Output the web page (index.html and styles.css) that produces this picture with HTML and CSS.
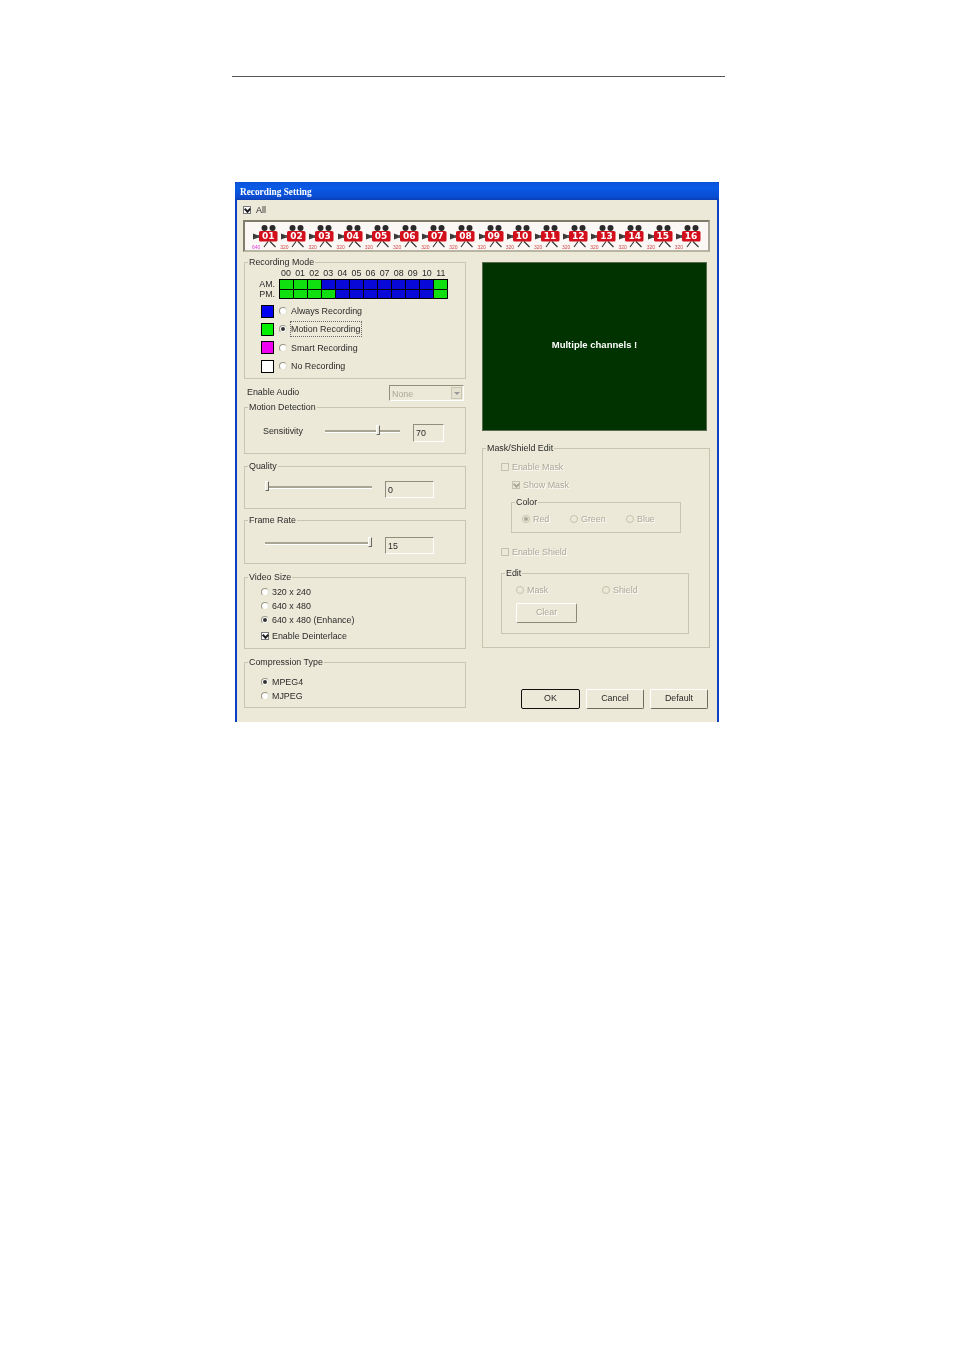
FILE: index.html
```html
<!DOCTYPE html>
<html lang="en">
<head>
<meta charset="utf-8">
<title>Recording Setting</title>
<link rel="stylesheet" href="styles.css">
</head>
<body>
<svg class="defs" width="0" height="0" aria-hidden="true">
  <symbol id="cam" viewBox="0 0 28 26">
    <circle cx="12.5" cy="6" r="3" fill="#2a2a2a"/>
    <circle cx="20.5" cy="6" r="3" fill="#2a2a2a"/>
    <path d="M1 11.5l4 1.5v3l-4 1.5z" fill="#3a3a3a"/>
    <rect x="5" y="13" width="3" height="3" fill="#555"/>
    <rect x="7" y="9" width="18.5" height="10.5" rx="1.5" fill="#d40f1c"/>
    <path d="M16 19.5l-4 5.5M18 19.5l5.500 5.500" stroke="#333" stroke-width="1.100" fill="none"/>
  </symbol>
</svg>
<hr class="rule">
<main class="dialog">
  <header class="titlebar">Recording Setting</header>
  <div class="all-row"><span class="check on"></span><span>All</span></div>
  <div class="strip">
    <div class="cam"><svg class="cam-icon"><use href="#cam"/></svg><b class="cam-no">01</b><i class="cam-res pink">640</i></div>
    <div class="cam"><svg class="cam-icon"><use href="#cam"/></svg><b class="cam-no">02</b><i class="cam-res">320</i></div>
    <div class="cam"><svg class="cam-icon"><use href="#cam"/></svg><b class="cam-no">03</b><i class="cam-res">320</i></div>
    <div class="cam"><svg class="cam-icon"><use href="#cam"/></svg><b class="cam-no">04</b><i class="cam-res">320</i></div>
    <div class="cam"><svg class="cam-icon"><use href="#cam"/></svg><b class="cam-no">05</b><i class="cam-res">320</i></div>
    <div class="cam"><svg class="cam-icon"><use href="#cam"/></svg><b class="cam-no">06</b><i class="cam-res">320</i></div>
    <div class="cam"><svg class="cam-icon"><use href="#cam"/></svg><b class="cam-no">07</b><i class="cam-res">320</i></div>
    <div class="cam"><svg class="cam-icon"><use href="#cam"/></svg><b class="cam-no">08</b><i class="cam-res">320</i></div>
    <div class="cam"><svg class="cam-icon"><use href="#cam"/></svg><b class="cam-no">09</b><i class="cam-res">320</i></div>
    <div class="cam"><svg class="cam-icon"><use href="#cam"/></svg><b class="cam-no">10</b><i class="cam-res">320</i></div>
    <div class="cam"><svg class="cam-icon"><use href="#cam"/></svg><b class="cam-no">11</b><i class="cam-res">320</i></div>
    <div class="cam"><svg class="cam-icon"><use href="#cam"/></svg><b class="cam-no">12</b><i class="cam-res">320</i></div>
    <div class="cam"><svg class="cam-icon"><use href="#cam"/></svg><b class="cam-no">13</b><i class="cam-res">320</i></div>
    <div class="cam"><svg class="cam-icon"><use href="#cam"/></svg><b class="cam-no">14</b><i class="cam-res">320</i></div>
    <div class="cam"><svg class="cam-icon"><use href="#cam"/></svg><b class="cam-no">15</b><i class="cam-res">320</i></div>
    <div class="cam"><svg class="cam-icon"><use href="#cam"/></svg><b class="cam-no">16</b><i class="cam-res">320</i></div>
  </div>
  <div class="columns">
    <section class="col-left">
      <div class="group g-mode">
        <span class="legend">Recording Mode</span>
        <div class="hours"><span>00</span><span>01</span><span>02</span><span>03</span><span>04</span><span>05</span><span>06</span><span>07</span><span>08</span><span>09</span><span>10</span><span>11</span></div>
        <div class="sched">
          <div class="ampm"><span>AM.</span><span>PM.</span></div>
          <div class="grid">
            <i class="g"></i><i class="g"></i><i class="g"></i><i class="b"></i><i class="b"></i><i class="b"></i><i class="b"></i><i class="b"></i><i class="b"></i><i class="b"></i><i class="b"></i><i class="g"></i>
            <i class="g"></i><i class="g"></i><i class="g"></i><i class="g"></i><i class="b"></i><i class="b"></i><i class="b"></i><i class="b"></i><i class="b"></i><i class="b"></i><i class="b"></i><i class="g"></i>
          </div>
        </div>
        <div class="modes">
          <div class="mode"><span class="swatch blue"></span><span class="radio"></span><span>Always Recording</span></div>
          <div class="mode"><span class="swatch green"></span><span class="radio on"></span><span class="focus">Motion Recording</span></div>
          <div class="mode"><span class="swatch magenta"></span><span class="radio"></span><span>Smart Recording</span></div>
          <div class="mode"><span class="swatch white"></span><span class="radio"></span><span>No Recording</span></div>
        </div>
      </div>
      <div class="audio"><span class="audio-label">Enable Audio</span><div class="combo"><span>None</span><span class="combo-btn"></span></div></div>
      <div class="group g-motion">
        <span class="legend">Motion Detection</span>
        <div class="ctl"><span class="sens">Sensitivity</span><div class="slider s-sens"><i class="thumb t-sens"></i></div><span class="field f-sens">70</span></div>
      </div>
      <div class="group g-quality">
        <span class="legend">Quality</span>
        <div class="ctl"><div class="slider s-wide"><i class="thumb t-min"></i></div><span class="field">0</span></div>
      </div>
      <div class="group g-rate">
        <span class="legend">Frame Rate</span>
        <div class="ctl"><div class="slider s-wide"><i class="thumb t-max"></i></div><span class="field">15</span></div>
      </div>
      <div class="group g-size">
        <span class="legend">Video Size</span>
        <div class="opt"><span class="radio"></span><span>320 x 240</span></div>
        <div class="opt"><span class="radio"></span><span>640 x 480</span></div>
        <div class="opt"><span class="radio on"></span><span>640 x 480 (Enhance)</span></div>
        <div class="opt opt-check"><span class="check on"></span><span>Enable Deinterlace</span></div>
      </div>
      <div class="group g-comp">
        <span class="legend">Compression Type</span>
        <div class="opt"><span class="radio on"></span><span>MPEG4</span></div>
        <div class="opt"><span class="radio"></span><span>MJPEG</span></div>
      </div>
    </section>
    <section class="col-right">
      <div class="preview">Multiple channels !</div>
      <div class="group g-mask">
        <span class="legend">Mask/Shield Edit</span>
        <div class="opt off"><span class="check"></span><span>Enable Mask</span></div>
        <div class="opt off show-mask"><span class="check on"></span><span>Show Mask</span></div>
        <div class="group g-color">
          <span class="legend">Color</span>
          <div class="inline off">
            <div class="opt w-red"><span class="radio on"></span><span>Red</span></div>
            <div class="opt w-green"><span class="radio"></span><span>Green</span></div>
            <div class="opt"><span class="radio"></span><span>Blue</span></div>
          </div>
        </div>
        <div class="opt off en-shield"><span class="check"></span><span>Enable Shield</span></div>
        <div class="group g-edit">
          <span class="legend">Edit</span>
          <div class="inline off">
            <div class="opt w-mask"><span class="radio"></span><span>Mask</span></div>
            <div class="opt"><span class="radio"></span><span>Shield</span></div>
          </div>
          <button class="btn clear" type="button" disabled>Clear</button>
        </div>
      </div>
      <div class="actions">
        <button class="btn ok" type="button">OK</button>
        <button class="btn cancel" type="button">Cancel</button>
        <button class="btn cancel" type="button">Default</button>
      </div>
    </section>
  </div>
</main>
</body>
</html>
```
FILE: styles.css
```css
html, body { margin: 0; padding: 0; background: #fff; }
body { height: 1350px; overflow: hidden; font: 8.9px/14px "Liberation Sans", Arial, sans-serif; color: #2a2a2a; }
.defs { position: absolute; }
.rule { margin: 76px 0 0 232px; width: 493px; height: 1px; border: 0; background: #555; }
.dialog { margin: 105px 0 0 235px; width: 484px; height: 540px; box-sizing: border-box; background: #ece9d8; border-left: 2px solid #0b3fc4; border-right: 2px solid #0b3fc4; filter: blur(0.35px); }
.titlebar { margin: 0 -2px; height: 18px; padding-left: 5px; background: linear-gradient(#0a52d8, #0a5be6 30%, #0a4cd0 85%, #0a3db4); color: #fff; font: bold 9.3px/20px "Liberation Serif", serif; border-radius: 3px 3px 0 0; }
.all-row { display: flex; align-items: center; gap: 5px; height: 20px; margin-left: 6px; }
.strip { display: flex; margin-left: 6px; width: 467px; height: 32px; box-sizing: border-box; padding-left: 7px; background: #faf7f4; border: 2px solid; border-color: #7f7c6a #a8a594 #b8b5a2 #7f7c6a; }
.cam { position: relative; width: 28.2px; flex: none; }
.cam-icon { display: block; width: 28px; height: 26px; }
.cam-no { position: absolute; left: 7px; top: 9px; width: 18.5px; text-align: center; color: #fff; font: bold 9px/10.5px "DejaVu Sans", sans-serif; }
.cam-res { position: absolute; left: 0; top: 22px; font: normal 5px/6px "Liberation Sans", sans-serif; color: #d04848; }
.cam-res.pink { color: #e040e0; }
.columns { display: flex; gap: 16px; margin-top: 10px; padding-left: 7px; }
.col-left { width: 222px; flex: none; }
.col-right { width: 228px; flex: none; }
.group { position: relative; box-sizing: border-box; border: 1px solid #c8c5b2; }
.legend { position: absolute; top: -8px; left: 3px; padding: 0 1px; background: #ece9d8; white-space: nowrap; }
.g-mode { height: 117px; padding-top: 5px; }
.hours { display: flex; margin-left: 34px; width: 169px; height: 10px; line-height: 10px; }
.hours span { flex: 1; text-align: center; }
.sched { display: flex; margin-top: 1px; }
.ampm { display: flex; flex-direction: column; width: 30px; text-align: right; line-height: 10px; height: 20px; }
.grid { display: grid; grid-template-columns: repeat(12, 1fr); grid-template-rows: 1fr 1fr; gap: 1px; width: 169px; height: 20px; margin-left: 4px; box-sizing: border-box; background: #000; border: 1px solid #000; }
.grid .g { background: #10e010; }
.grid .b { background: #0808d8; }
.modes { margin-top: 3px; }
.mode { display: flex; align-items: center; height: 18.33px; margin-left: 16px; }
.swatch { width: 13px; height: 13px; box-sizing: border-box; border: 1px solid #000; margin-right: 5px; }
.blue { background: #0000f0; }
.green { background: #00f000; }
.magenta { background: #f000f0; }
.white { background: #fff; }
.mode .radio { margin-right: 4px; }
.focus { outline: 1px dotted #666; }
.radio { position: relative; display: inline-block; width: 8px; height: 8px; flex: none; box-sizing: border-box; border-radius: 50%; background: #fff; border: 1px solid; border-color: #9a9786 #e0ddcc #e8e5d4 #9a9786; }
.radio.on::after { content: ""; position: absolute; left: 1px; top: 1px; width: 4px; height: 4px; border-radius: 50%; background: #333; }
.check { position: relative; display: inline-block; width: 8px; height: 8px; flex: none; box-sizing: border-box; background: #fff; border: 1px solid #777; }
.check.on::after { content: ""; position: absolute; left: 1px; top: 0; width: 3px; height: 3px; border: solid #222; border-width: 0 0 2px 2px; transform: rotate(-45deg); }
.audio { display: flex; justify-content: space-between; height: 28px; margin: 0 2px 0 3px; }
.audio-label { line-height: 26px; }
.combo { display: flex; justify-content: space-between; box-sizing: border-box; width: 75px; height: 16px; margin-top: 6px; padding: 1px 1px 1px 2px; border: 1px solid; border-color: #918e7c #fff #fff #918e7c; color: #aca899; }
.combo-btn { position: relative; width: 11px; background: #e4e1d0; border: 1px solid #c8c5b2; box-sizing: border-box; }
.combo-btn::after { content: ""; position: absolute; left: 2px; top: 4px; border: 3px solid transparent; border-top-color: #999; }
.ctl { display: flex; align-items: center; padding-left: 20px; }
.sens { width: 62px; margin: -4px 0 0 -2px; }
.slider { position: relative; height: 2px; margin-top: -4px; background: #a8a594; border-bottom: 1px solid #fff; }
.s-sens { width: 75px; }
.s-wide { width: 107px; }
.thumb { position: absolute; top: -5px; width: 4px; height: 10px; box-sizing: border-box; background: #ece9d8; border: 1px solid; border-color: #fff #666 #666 #fff; }
.t-sens { left: 51px; }
.t-min { left: 0; }
.t-max { right: 0; }
.field { box-sizing: border-box; width: 49px; height: 17px; margin-left: 13px; padding-left: 2px; line-height: 16px; border: 1px solid; border-color: #918e7c #fff #fff #918e7c; }
.f-sens { width: 31px; height: 18px; }
.g-motion { height: 47px; padding-top: 16px; }
.g-quality { height: 43px; margin-top: 12px; padding-top: 14px; }
.g-rate { height: 44px; margin-top: 11px; padding-top: 16px; }
.g-size { height: 72px; margin-top: 13px; padding: 7px 0 0 16px; }
.g-comp { height: 46px; margin-top: 13px; padding: 12px 0 0 16px; }
.opt { display: flex; align-items: center; gap: 3px; height: 14px; }
.opt-check { margin-top: 2px; }
.preview { width: 225px; height: 169px; box-sizing: border-box; padding-bottom: 4px; display: flex; align-items: center; justify-content: center; background: #003300; border: 1px solid #5a6a50; color: #fff; font-weight: bold; font-size: 9.5px; }
.g-mask { height: 200px; margin-top: 17px; padding: 11px 0 0 18px; }
.off { color: #aca899; text-shadow: 1px 1px 0 #fff; }
.off .radio, .off .check { border-color: #c4c1ae; background: #ece9d8; }
.off .radio.on::after { background: #aca899; }
.off .check.on::after { border-color: #aca899; }
.show-mask { margin: 4px 0 0 11px; }
.g-color { width: 170px; height: 31px; margin: 10px 0 0 10px; padding: 9px 0 0 10px; }
.inline { display: flex; }
.w-red { width: 48px; }
.w-green { width: 56px; }
.en-shield { margin-top: 12px; }
.g-edit { width: 188px; height: 61px; margin-top: 14px; padding: 9px 0 0 14px; }
.w-mask { width: 86px; }
.btn { display: block; box-sizing: border-box; padding: 0 0 2px; font: 8.9px "Liberation Sans", Arial, sans-serif; color: #2a2a2a; background: #ece9d8; border: 1px solid; border-color: #fff #6f6d60 #6f6d60 #fff; border-radius: 2px; }
.btn:disabled { color: #aca899; text-shadow: 1px 1px 0 #fff; border-color: #fff #8a8878 #8a8878 #fff; }
.clear { width: 61px; height: 20px; margin-top: 6px; }
.actions { display: flex; gap: 6px; margin: 41px 0 0 39px; }
.ok { width: 59px; height: 20px; border-color: #111; }
.cancel { width: 58px; height: 20px; }
```
